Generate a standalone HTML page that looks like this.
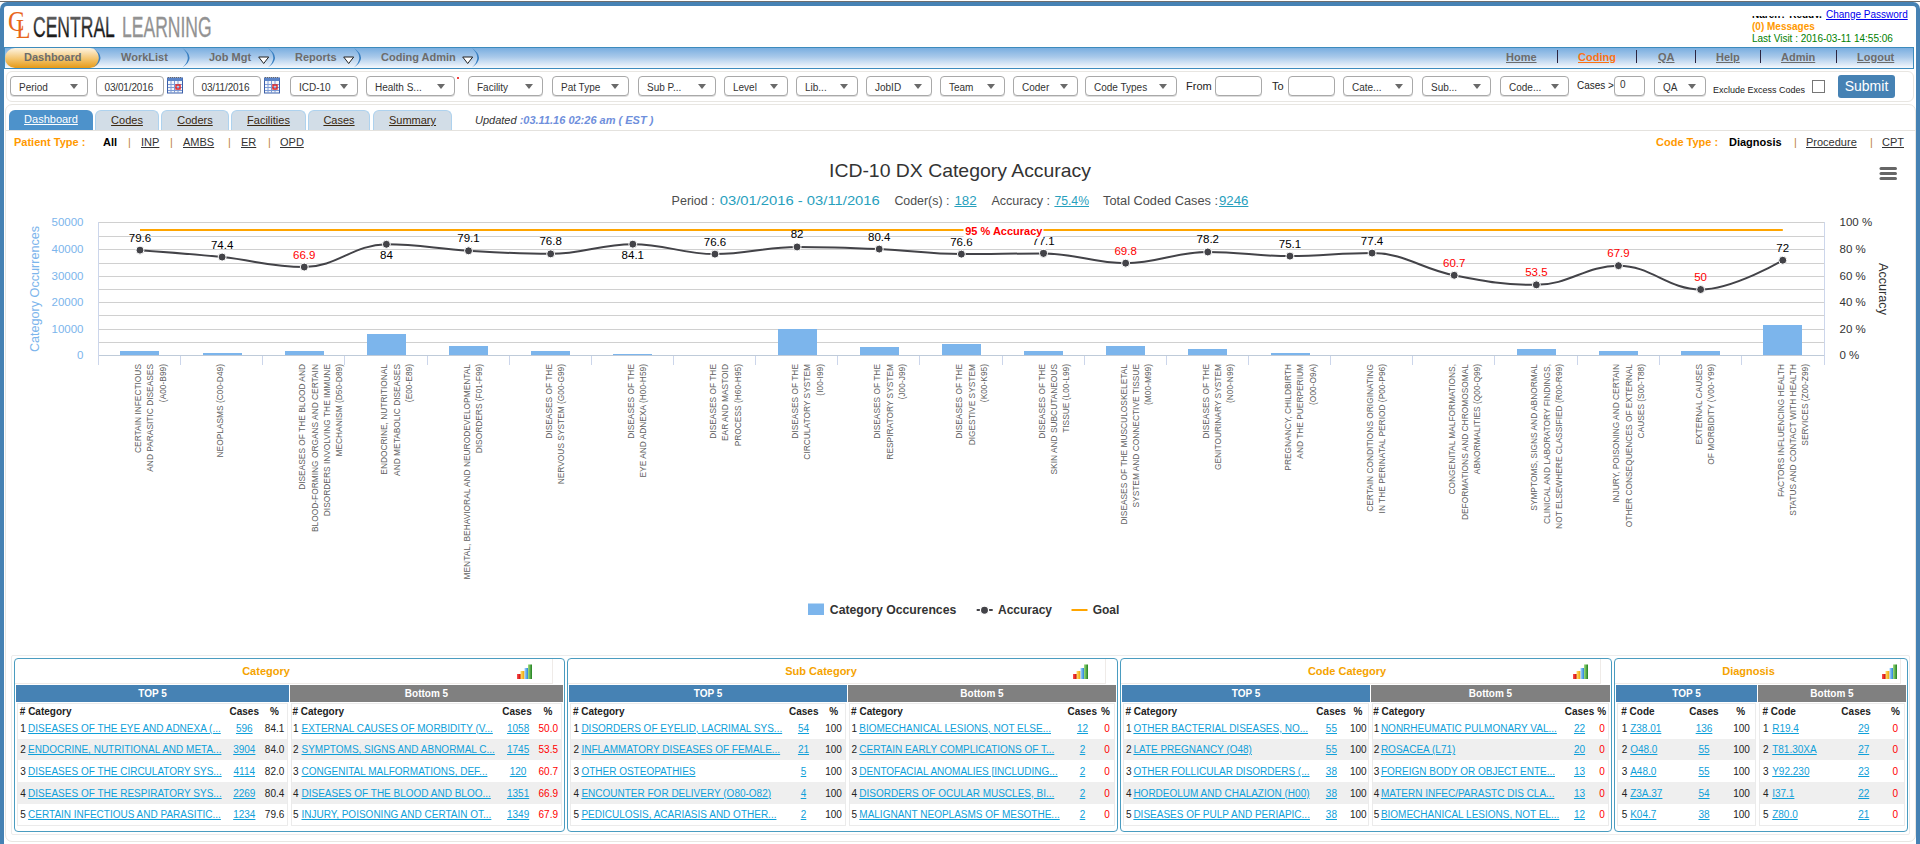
<!DOCTYPE html>
<html><head><meta charset="utf-8"><title>Central Learning - Dashboard</title>
<style>
html,body{margin:0;padding:0;width:1920px;height:844px;overflow:hidden;background:#fff;}
body{position:relative;font-family:"Liberation Sans",sans-serif;}
div,a,span,td,th{font-family:"Liberation Sans",sans-serif;}
</style></head><body>
<div style="position:absolute;left:0;top:1px;width:1920px;height:1px;background:#6e6e6e"></div>
<div style="position:absolute;left:0;top:2px;width:1912px;height:850px;border:4px solid #4682b4;border-bottom:none;border-radius:7px 7px 0 0;"></div>
<div style="position:absolute;left:8px;top:7px;font-family:'Liberation Serif',serif;color:#e8661a;font-size:29px;line-height:29px;transform:scaleX(0.85);transform-origin:0 0">C</div>
<div style="position:absolute;left:15.5px;top:15px;font-family:'Liberation Serif',serif;color:#e8661a;font-size:27px;line-height:29px;transform:scaleX(0.88);transform-origin:0 0">L</div>
<svg style="position:absolute;left:0;top:0" width="220" height="46"><defs><linearGradient id="lgc" x1="0" y1="0" x2="0" y2="1"><stop offset="0" stop-color="#8a8a8a"/><stop offset="0.45" stop-color="#333"/><stop offset="1" stop-color="#0d0d0d"/></linearGradient></defs>
<text transform="translate(33,36.6) scale(0.605,1)" font-family="Liberation Sans, sans-serif" font-size="29" fill="url(#lgc)" stroke="url(#lgc)" stroke-width="0.3">CENTRAL</text>
<text transform="translate(122,36.6) scale(0.605,1)" font-family="Liberation Sans, sans-serif" font-size="29" fill="#939393" stroke="#939393" stroke-width="0.3">LEARNING</text></svg>
<div style="position:absolute;left:1752px;top:15.5px;width:72px;height:2.5px;overflow:hidden;"><div style="position:absolute;top:-7.7px;left:0;font-size:10px;font-weight:bold;line-height:13px;color:#000;white-space:nowrap">Naren? Reddy,</div></div>
<a style="position:absolute;left:1826px;top:7.5px;font-size:10px;line-height:13px;color:#0000ee;text-decoration:underline;white-space:nowrap">Change Password</a>
<div style="position:absolute;left:1752px;top:20px;font-size:10px;font-weight:bold;line-height:13px;color:#ff9900;white-space:nowrap">(0) Messages</div>
<div style="position:absolute;left:1752px;top:32px;font-size:10px;line-height:13px;color:#008000;white-space:nowrap">Last Visit : 2016-03-11 14:55:06</div>
<div style="position:absolute;left:4px;top:47px;width:1908px;height:20px;border:1px solid #3d8bbd;background:linear-gradient(#7aaee0,#a9c9ea 45%,#f6f9fd);"></div>
<div style="position:absolute;left:5px;top:48px;width:95px;height:20px;border-radius:10px;background:linear-gradient(#fdf4e3,#f3c46d 55%,#e59a17);"></div>
<div style="position:absolute;left:24px;top:50px;font-size:11px;font-weight:bold;line-height:14px;color:#6c6c6c;white-space:nowrap">Dashboard</div>
<div style="position:absolute;left:121px;top:50px;font-size:11px;font-weight:bold;line-height:14px;color:#6c6c6c;white-space:nowrap">WorkList</div>
<div style="position:absolute;left:209px;top:50px;font-size:11px;font-weight:bold;line-height:14px;color:#6c6c6c;white-space:nowrap">Job Mgt</div>
<div style="position:absolute;left:295px;top:50px;font-size:11px;font-weight:bold;line-height:14px;color:#6c6c6c;white-space:nowrap">Reports</div>
<div style="position:absolute;left:381px;top:50px;font-size:11px;font-weight:bold;line-height:14px;color:#6c6c6c;white-space:nowrap">Coding Admin</div>
<svg style="position:absolute;left:0;top:0" width="500" height="70"><path d="M93.5 48 Q107.5 57.75 93.5 67.5 Q104.1 57.75 93.5 48 Z" fill="#3a80c2"/><path d="M182.5 48 Q196.5 57.75 182.5 67.5 Q193.1 57.75 182.5 48 Z" fill="#3a80c2"/><path d="M268 48 Q282 57.75 268 67.5 Q278.6 57.75 268 48 Z" fill="#3a80c2"/><path d="M354 48 Q368 57.75 354 67.5 Q364.6 57.75 354 48 Z" fill="#3a80c2"/><path d="M472 48 Q486 57.75 472 67.5 Q482.6 57.75 472 48 Z" fill="#3a80c2"/></svg>
<svg style="position:absolute;left:258px;top:56px" width="12" height="9"><path d="M0.7 1 L10.7 1 L5.7 7.5 Z" fill="#fff" stroke="#222" stroke-width="1"/></svg>
<svg style="position:absolute;left:343px;top:56px" width="12" height="9"><path d="M0.7 1 L10.7 1 L5.7 7.5 Z" fill="#fff" stroke="#222" stroke-width="1"/></svg>
<svg style="position:absolute;left:462px;top:56px" width="12" height="9"><path d="M0.7 1 L10.7 1 L5.7 7.5 Z" fill="#fff" stroke="#222" stroke-width="1"/></svg>
<div style="position:absolute;left:1506px;top:50px;font-size:11px;font-weight:bold;line-height:14px;color:#6c6c6c;text-decoration:underline;white-space:nowrap">Home</div>
<div style="position:absolute;left:1578px;top:50px;font-size:11px;font-weight:bold;line-height:14px;color:#fb7214;text-decoration:underline;white-space:nowrap">Coding</div>
<div style="position:absolute;left:1658px;top:50px;font-size:11px;font-weight:bold;line-height:14px;color:#6c6c6c;text-decoration:underline;white-space:nowrap">QA</div>
<div style="position:absolute;left:1716px;top:50px;font-size:11px;font-weight:bold;line-height:14px;color:#6c6c6c;text-decoration:underline;white-space:nowrap">Help</div>
<div style="position:absolute;left:1781px;top:50px;font-size:11px;font-weight:bold;line-height:14px;color:#6c6c6c;text-decoration:underline;white-space:nowrap">Admin</div>
<div style="position:absolute;left:1857px;top:50px;font-size:11px;font-weight:bold;line-height:14px;color:#6c6c6c;text-decoration:underline;white-space:nowrap">Logout</div>
<div style="position:absolute;left:1556.5px;top:50px;width:1.3px;height:13px;background:#2c2440"></div>
<div style="position:absolute;left:1635.5px;top:50px;width:1.3px;height:13px;background:#2c2440"></div>
<div style="position:absolute;left:1694.5px;top:50px;width:1.3px;height:13px;background:#2c2440"></div>
<div style="position:absolute;left:1759.5px;top:50px;width:1.3px;height:13px;background:#2c2440"></div>
<div style="position:absolute;left:1835.5px;top:50px;width:1.3px;height:13px;background:#2c2440"></div>
<div style="position:absolute;left:6px;top:71px;width:1906px;height:29px;border:1px solid #e8e6e2;border-radius:6px;"></div>
<div style="position:absolute;left:10px;top:76px;width:76px;height:18px;border:1px solid #a9a9a9;border-radius:4px;background:#fff;box-shadow:0 1px 0 #ddd"></div>
<div style="position:absolute;left:19px;top:80.5px;font-size:10px;line-height:13px;color:#333;white-space:nowrap">Period</div>
<svg style="position:absolute;left:70px;top:84px" width="9" height="6"><path d="M0 0 L8 0 L4 5 Z" fill="#6a6a6a"/></svg>
<div style="position:absolute;left:290px;top:76px;width:66px;height:18px;border:1px solid #a9a9a9;border-radius:4px;background:#fff;box-shadow:0 1px 0 #ddd"></div>
<div style="position:absolute;left:299px;top:80.5px;font-size:10px;line-height:13px;color:#333;white-space:nowrap">ICD-10</div>
<svg style="position:absolute;left:340px;top:84px" width="9" height="6"><path d="M0 0 L8 0 L4 5 Z" fill="#6a6a6a"/></svg>
<div style="position:absolute;left:366px;top:76px;width:87px;height:18px;border:1px solid #a9a9a9;border-radius:4px;background:#fff;box-shadow:0 1px 0 #ddd"></div>
<div style="position:absolute;left:375px;top:80.5px;font-size:10px;line-height:13px;color:#333;white-space:nowrap">Health S...</div>
<svg style="position:absolute;left:437px;top:84px" width="9" height="6"><path d="M0 0 L8 0 L4 5 Z" fill="#6a6a6a"/></svg>
<div style="position:absolute;left:468px;top:76px;width:73px;height:18px;border:1px solid #a9a9a9;border-radius:4px;background:#fff;box-shadow:0 1px 0 #ddd"></div>
<div style="position:absolute;left:477px;top:80.5px;font-size:10px;line-height:13px;color:#333;white-space:nowrap">Facility</div>
<svg style="position:absolute;left:525px;top:84px" width="9" height="6"><path d="M0 0 L8 0 L4 5 Z" fill="#6a6a6a"/></svg>
<div style="position:absolute;left:552px;top:76px;width:75px;height:18px;border:1px solid #a9a9a9;border-radius:4px;background:#fff;box-shadow:0 1px 0 #ddd"></div>
<div style="position:absolute;left:561px;top:80.5px;font-size:10px;line-height:13px;color:#333;white-space:nowrap">Pat Type</div>
<svg style="position:absolute;left:611px;top:84px" width="9" height="6"><path d="M0 0 L8 0 L4 5 Z" fill="#6a6a6a"/></svg>
<div style="position:absolute;left:638px;top:76px;width:76px;height:18px;border:1px solid #a9a9a9;border-radius:4px;background:#fff;box-shadow:0 1px 0 #ddd"></div>
<div style="position:absolute;left:647px;top:80.5px;font-size:10px;line-height:13px;color:#333;white-space:nowrap">Sub P...</div>
<svg style="position:absolute;left:698px;top:84px" width="9" height="6"><path d="M0 0 L8 0 L4 5 Z" fill="#6a6a6a"/></svg>
<div style="position:absolute;left:724px;top:76px;width:62px;height:18px;border:1px solid #a9a9a9;border-radius:4px;background:#fff;box-shadow:0 1px 0 #ddd"></div>
<div style="position:absolute;left:733px;top:80.5px;font-size:10px;line-height:13px;color:#333;white-space:nowrap">Level</div>
<svg style="position:absolute;left:770px;top:84px" width="9" height="6"><path d="M0 0 L8 0 L4 5 Z" fill="#6a6a6a"/></svg>
<div style="position:absolute;left:796px;top:76px;width:60px;height:18px;border:1px solid #a9a9a9;border-radius:4px;background:#fff;box-shadow:0 1px 0 #ddd"></div>
<div style="position:absolute;left:805px;top:80.5px;font-size:10px;line-height:13px;color:#333;white-space:nowrap">Lib...</div>
<svg style="position:absolute;left:840px;top:84px" width="9" height="6"><path d="M0 0 L8 0 L4 5 Z" fill="#6a6a6a"/></svg>
<div style="position:absolute;left:866px;top:76px;width:64px;height:18px;border:1px solid #a9a9a9;border-radius:4px;background:#fff;box-shadow:0 1px 0 #ddd"></div>
<div style="position:absolute;left:875px;top:80.5px;font-size:10px;line-height:13px;color:#333;white-space:nowrap">JobID</div>
<svg style="position:absolute;left:914px;top:84px" width="9" height="6"><path d="M0 0 L8 0 L4 5 Z" fill="#6a6a6a"/></svg>
<div style="position:absolute;left:940px;top:76px;width:63px;height:18px;border:1px solid #a9a9a9;border-radius:4px;background:#fff;box-shadow:0 1px 0 #ddd"></div>
<div style="position:absolute;left:949px;top:80.5px;font-size:10px;line-height:13px;color:#333;white-space:nowrap">Team</div>
<svg style="position:absolute;left:987px;top:84px" width="9" height="6"><path d="M0 0 L8 0 L4 5 Z" fill="#6a6a6a"/></svg>
<div style="position:absolute;left:1013px;top:76px;width:63px;height:18px;border:1px solid #a9a9a9;border-radius:4px;background:#fff;box-shadow:0 1px 0 #ddd"></div>
<div style="position:absolute;left:1022px;top:80.5px;font-size:10px;line-height:13px;color:#333;white-space:nowrap">Coder</div>
<svg style="position:absolute;left:1060px;top:84px" width="9" height="6"><path d="M0 0 L8 0 L4 5 Z" fill="#6a6a6a"/></svg>
<div style="position:absolute;left:1085px;top:76px;width:90px;height:18px;border:1px solid #a9a9a9;border-radius:4px;background:#fff;box-shadow:0 1px 0 #ddd"></div>
<div style="position:absolute;left:1094px;top:80.5px;font-size:10px;line-height:13px;color:#333;white-space:nowrap">Code Types</div>
<svg style="position:absolute;left:1159px;top:84px" width="9" height="6"><path d="M0 0 L8 0 L4 5 Z" fill="#6a6a6a"/></svg>
<div style="position:absolute;left:1343px;top:76px;width:68px;height:18px;border:1px solid #a9a9a9;border-radius:4px;background:#fff;box-shadow:0 1px 0 #ddd"></div>
<div style="position:absolute;left:1352px;top:80.5px;font-size:10px;line-height:13px;color:#333;white-space:nowrap">Cate...</div>
<svg style="position:absolute;left:1395px;top:84px" width="9" height="6"><path d="M0 0 L8 0 L4 5 Z" fill="#6a6a6a"/></svg>
<div style="position:absolute;left:1422px;top:76px;width:67px;height:18px;border:1px solid #a9a9a9;border-radius:4px;background:#fff;box-shadow:0 1px 0 #ddd"></div>
<div style="position:absolute;left:1431px;top:80.5px;font-size:10px;line-height:13px;color:#333;white-space:nowrap">Sub...</div>
<svg style="position:absolute;left:1473px;top:84px" width="9" height="6"><path d="M0 0 L8 0 L4 5 Z" fill="#6a6a6a"/></svg>
<div style="position:absolute;left:1500px;top:76px;width:67px;height:18px;border:1px solid #a9a9a9;border-radius:4px;background:#fff;box-shadow:0 1px 0 #ddd"></div>
<div style="position:absolute;left:1509px;top:80.5px;font-size:10px;line-height:13px;color:#333;white-space:nowrap">Code...</div>
<svg style="position:absolute;left:1551px;top:84px" width="9" height="6"><path d="M0 0 L8 0 L4 5 Z" fill="#6a6a6a"/></svg>
<div style="position:absolute;left:1654px;top:76px;width:50px;height:18px;border:1px solid #a9a9a9;border-radius:4px;background:#fff;box-shadow:0 1px 0 #ddd"></div>
<div style="position:absolute;left:1663px;top:80.5px;font-size:10px;line-height:13px;color:#333;white-space:nowrap">QA</div>
<svg style="position:absolute;left:1688px;top:84px" width="9" height="6"><path d="M0 0 L8 0 L4 5 Z" fill="#6a6a6a"/></svg>
<div style="position:absolute;left:96px;top:76px;width:66px;height:18px;border:1px solid #a9a9a9;border-radius:4px;background:#fff;box-shadow:0 1px 0 #ddd"></div>
<div style="position:absolute;left:104.5px;top:81px;font-size:10px;line-height:13px;color:#333;letter-spacing:-0.15px">03/01/2016</div>
<div style="position:absolute;left:193px;top:76px;width:66px;height:18px;border:1px solid #a9a9a9;border-radius:4px;background:#fff;box-shadow:0 1px 0 #ddd"></div>
<div style="position:absolute;left:201.5px;top:81px;font-size:10px;line-height:13px;color:#333;letter-spacing:-0.15px">03/11/2016</div>
<div style="position:absolute;left:1215px;top:76px;width:45px;height:18px;border:1px solid #a9a9a9;border-radius:4px;background:#fff;box-shadow:0 1px 0 #ddd"></div>
<div style="position:absolute;left:1288px;top:76px;width:45px;height:18px;border:1px solid #a9a9a9;border-radius:4px;background:#fff;box-shadow:0 1px 0 #ddd"></div>
<div style="position:absolute;left:1614px;top:76px;width:29px;height:18px;border:1px solid #a9a9a9;border-radius:4px;background:#fff;box-shadow:0 1px 0 #ddd"></div>
<div style="position:absolute;left:1620px;top:78px;font-size:10px;line-height:13px;color:#333">0</div>
<svg style="position:absolute;left:167px;top:77px" width="16" height="17" viewBox="0 0 16 17">
<rect x="0.5" y="1" width="15" height="15" fill="#f4f7fb" stroke="#3b5ea8" stroke-width="1"/>
<rect x="0.5" y="1" width="15" height="3" fill="#5b84c8"/>
<path d="M1 0.5 h14" stroke="#666" stroke-width="1" stroke-dasharray="1 1"/>
<path d="M4 4v12M7.5 4v12M11 4v12M1 7.5h14M1 10.5h14M1 13.5h14" stroke="#7d9bd6" stroke-width="1"/>
<rect x="9" y="8" width="4" height="4" fill="none" stroke="#e02020" stroke-width="1.4"/>
</svg>
<svg style="position:absolute;left:264px;top:77px" width="16" height="17" viewBox="0 0 16 17">
<rect x="0.5" y="1" width="15" height="15" fill="#f4f7fb" stroke="#3b5ea8" stroke-width="1"/>
<rect x="0.5" y="1" width="15" height="3" fill="#5b84c8"/>
<path d="M1 0.5 h14" stroke="#666" stroke-width="1" stroke-dasharray="1 1"/>
<path d="M4 4v12M7.5 4v12M11 4v12M1 7.5h14M1 10.5h14M1 13.5h14" stroke="#7d9bd6" stroke-width="1"/>
<rect x="9" y="8" width="4" height="4" fill="none" stroke="#e02020" stroke-width="1.4"/>
</svg>
<div style="position:absolute;left:457px;top:77px;width:2px;height:2px;background:#e00;border-radius:1px"></div>
<div style="position:absolute;left:1186px;top:80px;font-size:11px;line-height:13px;color:#222">From</div>
<div style="position:absolute;left:1272px;top:80px;font-size:11px;line-height:13px;color:#222">To</div>
<div style="position:absolute;left:1577px;top:79px;font-size:10px;line-height:13px;color:#222">Cases &gt;</div>
<div style="position:absolute;left:1713px;top:85px;font-size:9px;line-height:11px;color:#222;white-space:nowrap">Exclude Excess Codes</div>
<div style="position:absolute;left:1812px;top:80px;width:11px;height:11px;border:1px solid #767676;background:#fff"></div>
<div style="position:absolute;left:1838px;top:75px;width:57px;height:23px;background:#4682b4;border-radius:3px;color:#fff;font-size:14px;line-height:23px;text-align:center">Submit</div>
<div style="position:absolute;left:5px;top:104px;width:1909px;height:736px;border:1px solid #e8e6e2;border-radius:7px;"></div>
<div style="position:absolute;left:9px;top:110px;width:84px;height:20px;background:#4d92cb;border-radius:6px 6px 0 0;color:#fff;font-size:11px;line-height:19px;text-align:center;text-decoration:underline">Dashboard</div>
<div style="position:absolute;left:95px;top:110px;width:62px;height:19px;background:#d2dde7;border:1px solid #aed2ee;border-bottom:none;border-radius:6px 6px 0 0;color:#3a2810;font-size:11px;line-height:19px;text-align:center;text-decoration:underline">Codes</div>
<div style="position:absolute;left:161px;top:110px;width:66px;height:19px;background:#d2dde7;border:1px solid #aed2ee;border-bottom:none;border-radius:6px 6px 0 0;color:#3a2810;font-size:11px;line-height:19px;text-align:center;text-decoration:underline">Coders</div>
<div style="position:absolute;left:231px;top:110px;width:73px;height:19px;background:#d2dde7;border:1px solid #aed2ee;border-bottom:none;border-radius:6px 6px 0 0;color:#3a2810;font-size:11px;line-height:19px;text-align:center;text-decoration:underline">Facilities</div>
<div style="position:absolute;left:308px;top:110px;width:60px;height:19px;background:#d2dde7;border:1px solid #aed2ee;border-bottom:none;border-radius:6px 6px 0 0;color:#3a2810;font-size:11px;line-height:19px;text-align:center;text-decoration:underline">Cases</div>
<div style="position:absolute;left:373px;top:110px;width:77px;height:19px;background:#d2dde7;border:1px solid #aed2ee;border-bottom:none;border-radius:6px 6px 0 0;color:#3a2810;font-size:11px;line-height:19px;text-align:center;text-decoration:underline">Summary</div>
<div style="position:absolute;left:6px;top:130px;width:1910px;height:1px;background:#e4e2de"></div>
<div style="position:absolute;left:475px;top:113px;font-size:11px;line-height:14px;font-style:italic;color:#333;white-space:nowrap">Updated <span style="color:#6f8fdc;font-weight:bold">:03.11.16 02:26 am ( EST )</span></div>
<div style="position:absolute;left:14px;top:136px;font-size:11px;line-height:13px;color:#ff9900;font-weight:bold;white-space:nowrap">Patient Type :</div>
<div style="position:absolute;left:103px;top:136px;font-size:11px;line-height:13px;color:#000;font-weight:bold">All</div>
<div style="position:absolute;left:128px;top:136px;font-size:11px;line-height:13px;color:#c08040">|</div>
<div style="position:absolute;left:141px;top:136px;font-size:11px;line-height:13px;color:#333;text-decoration:underline">INP</div>
<div style="position:absolute;left:170px;top:136px;font-size:11px;line-height:13px;color:#c08040">|</div>
<div style="position:absolute;left:183px;top:136px;font-size:11px;line-height:13px;color:#333;text-decoration:underline">AMBS</div>
<div style="position:absolute;left:228px;top:136px;font-size:11px;line-height:13px;color:#c08040">|</div>
<div style="position:absolute;left:241px;top:136px;font-size:11px;line-height:13px;color:#333;text-decoration:underline">ER</div>
<div style="position:absolute;left:268px;top:136px;font-size:11px;line-height:13px;color:#c08040">|</div>
<div style="position:absolute;left:280px;top:136px;font-size:11px;line-height:13px;color:#333;text-decoration:underline">OPD</div>
<div style="position:absolute;left:1656px;top:136px;font-size:11px;line-height:13px;color:#ff9900;font-weight:bold;white-space:nowrap">Code Type :</div>
<div style="position:absolute;left:1729px;top:136px;font-size:11px;line-height:13px;color:#000;font-weight:bold">Diagnosis</div>
<div style="position:absolute;left:1794px;top:136px;font-size:11px;line-height:13px;color:#c08040">|</div>
<div style="position:absolute;left:1806px;top:136px;font-size:11px;line-height:13px;color:#333;text-decoration:underline">Procedure</div>
<div style="position:absolute;left:1870px;top:136px;font-size:11px;line-height:13px;color:#c08040">|</div>
<div style="position:absolute;left:1882px;top:136px;font-size:11px;line-height:13px;color:#333;text-decoration:underline">CPT</div>
<svg style="position:absolute;left:0;top:150px" width="1920" height="490" viewBox="0 150 1920 490" font-family="Liberation Sans, sans-serif">
<text x="960" y="176.6" text-anchor="middle" font-size="19" fill="#333" textLength="262" lengthAdjust="spacingAndGlyphs">ICD-10 DX Category Accuracy</text>
<text x="671.6" y="204.8" font-size="12" fill="#4d4d4d" textLength="43.1" lengthAdjust="spacingAndGlyphs">Period :</text>
<text x="719.7" y="204.8" font-size="12" fill="#27a0bd" textLength="160.1" lengthAdjust="spacingAndGlyphs">03/01/2016 - 03/11/2016</text>
<text x="894.4" y="204.8" font-size="12" fill="#4d4d4d" textLength="55.0" lengthAdjust="spacingAndGlyphs">Coder(s) :</text>
<text x="954.4" y="204.8" font-size="12" fill="#27a0bd" textLength="22.2" lengthAdjust="spacingAndGlyphs">182</text>
<rect x="954.4" y="206" width="22.2" height="1" fill="#27a0bd"/>
<text x="991.4" y="204.8" font-size="12" fill="#4d4d4d" textLength="58.6" lengthAdjust="spacingAndGlyphs">Accuracy :</text>
<text x="1054.4" y="204.8" font-size="12" fill="#27a0bd" textLength="34.6" lengthAdjust="spacingAndGlyphs">75.4%</text>
<rect x="1054.4" y="206" width="34.6" height="1" fill="#27a0bd"/>
<text x="1103" y="204.8" font-size="12" fill="#4d4d4d" textLength="115.0" lengthAdjust="spacingAndGlyphs">Total Coded Cases :</text>
<text x="1219" y="204.8" font-size="12" fill="#27a0bd" textLength="29.4" lengthAdjust="spacingAndGlyphs">9246</text>
<rect x="1219" y="206" width="29.4" height="1" fill="#27a0bd"/>
<rect x="1879.5" y="167" width="17.5" height="3" rx="1.5" fill="#666"/>
<rect x="1879.5" y="172" width="17.5" height="3" rx="1.5" fill="#666"/>
<rect x="1879.5" y="177" width="17.5" height="3" rx="1.5" fill="#666"/>
<rect x="99" y="222" width="1725" height="1" fill="#d0d0d0"/>
<rect x="99" y="236" width="1725" height="1" fill="#d0d0d0"/>
<rect x="99" y="249" width="1725" height="1" fill="#d0d0d0"/>
<rect x="99" y="263" width="1725" height="1" fill="#d0d0d0"/>
<rect x="99" y="276" width="1725" height="1" fill="#d0d0d0"/>
<rect x="99" y="289" width="1725" height="1" fill="#d0d0d0"/>
<rect x="99" y="302" width="1725" height="1" fill="#d0d0d0"/>
<rect x="99" y="315" width="1725" height="1" fill="#d0d0d0"/>
<rect x="99" y="329" width="1725" height="1" fill="#d0d0d0"/>
<rect x="99" y="342" width="1725" height="1" fill="#d0d0d0"/>
<rect x="120" y="351" width="39" height="4" fill="#7cb5ec"/>
<rect x="203" y="353" width="39" height="2" fill="#7cb5ec"/>
<rect x="285" y="351" width="39" height="4" fill="#7cb5ec"/>
<rect x="367" y="334" width="39" height="21" fill="#7cb5ec"/>
<rect x="449" y="346" width="39" height="9" fill="#7cb5ec"/>
<rect x="531" y="351" width="39" height="4" fill="#7cb5ec"/>
<rect x="613" y="354" width="39" height="1" fill="#7cb5ec"/>
<rect x="778" y="329" width="39" height="26" fill="#7cb5ec"/>
<rect x="860" y="347" width="39" height="8" fill="#7cb5ec"/>
<rect x="942" y="344" width="39" height="11" fill="#7cb5ec"/>
<rect x="1024" y="351" width="39" height="4" fill="#7cb5ec"/>
<rect x="1106" y="346" width="39" height="9" fill="#7cb5ec"/>
<rect x="1188" y="349" width="39" height="6" fill="#7cb5ec"/>
<rect x="1271" y="353" width="39" height="2" fill="#7cb5ec"/>
<rect x="1517" y="349" width="39" height="6" fill="#7cb5ec"/>
<rect x="1599" y="351" width="39" height="4" fill="#7cb5ec"/>
<rect x="1681" y="351" width="39" height="4" fill="#7cb5ec"/>
<rect x="1763" y="325" width="39" height="30" fill="#7cb5ec"/>
<rect x="99" y="355" width="1726" height="1" fill="#bfcbd9"/>
<rect x="98" y="222" width="1" height="143" fill="#ccd6eb"/>
<rect x="1824" y="222" width="1" height="143" fill="#ccd6eb"/>
<rect x="180" y="356" width="1" height="9" fill="#ccd6eb"/>
<rect x="262" y="356" width="1" height="9" fill="#ccd6eb"/>
<rect x="344" y="356" width="1" height="9" fill="#ccd6eb"/>
<rect x="427" y="356" width="1" height="9" fill="#ccd6eb"/>
<rect x="509" y="356" width="1" height="9" fill="#ccd6eb"/>
<rect x="591" y="356" width="1" height="9" fill="#ccd6eb"/>
<rect x="673" y="356" width="1" height="9" fill="#ccd6eb"/>
<rect x="755" y="356" width="1" height="9" fill="#ccd6eb"/>
<rect x="837" y="356" width="1" height="9" fill="#ccd6eb"/>
<rect x="919" y="356" width="1" height="9" fill="#ccd6eb"/>
<rect x="1002" y="356" width="1" height="9" fill="#ccd6eb"/>
<rect x="1084" y="356" width="1" height="9" fill="#ccd6eb"/>
<rect x="1166" y="356" width="1" height="9" fill="#ccd6eb"/>
<rect x="1248" y="356" width="1" height="9" fill="#ccd6eb"/>
<rect x="1330" y="356" width="1" height="9" fill="#ccd6eb"/>
<rect x="1412" y="356" width="1" height="9" fill="#ccd6eb"/>
<rect x="1494" y="356" width="1" height="9" fill="#ccd6eb"/>
<rect x="1577" y="356" width="1" height="9" fill="#ccd6eb"/>
<rect x="1659" y="356" width="1" height="9" fill="#ccd6eb"/>
<rect x="1741" y="356" width="1" height="9" fill="#ccd6eb"/>
<rect x="140.0" y="229" width="1642.8" height="2" fill="#ffa500"/>
<text x="83.5" y="359.2" text-anchor="end" font-size="11.5" fill="#7cb5ec">0</text>
<text x="1839.5" y="359.2" font-size="11.5" fill="#333">0 %</text>
<text x="83.5" y="333.2" text-anchor="end" font-size="11.5" fill="#7cb5ec">10000</text>
<text x="1839.5" y="333.2" font-size="11.5" fill="#333">20 %</text>
<text x="83.5" y="306.2" text-anchor="end" font-size="11.5" fill="#7cb5ec">20000</text>
<text x="1839.5" y="306.2" font-size="11.5" fill="#333">40 %</text>
<text x="83.5" y="280.2" text-anchor="end" font-size="11.5" fill="#7cb5ec">30000</text>
<text x="1839.5" y="280.2" font-size="11.5" fill="#333">60 %</text>
<text x="83.5" y="253.2" text-anchor="end" font-size="11.5" fill="#7cb5ec">40000</text>
<text x="1839.5" y="253.2" font-size="11.5" fill="#333">80 %</text>
<text x="83.5" y="226.2" text-anchor="end" font-size="11.5" fill="#7cb5ec">50000</text>
<text x="1839.5" y="226.2" font-size="11.5" fill="#333">100 %</text>
<text transform="translate(39.3,289) rotate(-90)" text-anchor="middle" font-size="12.2" fill="#7cb5ec" textLength="126" lengthAdjust="spacingAndGlyphs">Category Occurrences</text>
<text transform="translate(1879,289) rotate(90)" text-anchor="middle" font-size="13" fill="#333" textLength="52" lengthAdjust="spacingAndGlyphs">Accuracy</text>
<path d="M 139.97 250.13 C 139.97 250.13 189.25 253.67 222.11 257.05 C 254.97 260.43 271.39 267.02 304.25 267.02 C 337.11 267.02 353.53 244.28 386.39 244.28 C 419.25 244.28 435.67 248.88 468.53 250.80 C 501.39 252.71 517.81 253.86 550.67 253.86 C 583.53 253.86 599.95 244.15 632.81 244.15 C 665.67 244.15 682.09 254.12 714.95 254.12 C 747.81 254.12 764.23 246.94 797.09 246.94 C 829.95 246.94 846.37 247.63 879.23 249.07 C 912.09 250.50 928.51 254.12 961.37 254.12 C 994.23 254.12 1010.65 253.46 1043.51 253.46 C 1076.37 253.46 1092.79 263.17 1125.65 263.17 C 1158.51 263.17 1174.93 251.99 1207.79 251.99 C 1240.65 251.99 1257.07 256.12 1289.93 256.12 C 1322.79 256.12 1339.21 253.06 1372.07 253.06 C 1404.93 253.06 1421.35 268.91 1454.21 275.27 C 1487.07 281.63 1503.49 284.85 1536.35 284.85 C 1569.21 284.85 1585.63 265.69 1618.49 265.69 C 1651.35 265.69 1667.77 289.50 1700.63 289.50 C 1733.49 289.50 1782.77 260.24 1782.77 260.24" fill="none" stroke="#434348" stroke-width="2"/>
<circle cx="139.97" cy="250.13" r="4" fill="#434348" stroke="#fff" stroke-width="1"/>
<circle cx="222.11" cy="257.05" r="4" fill="#434348" stroke="#fff" stroke-width="1"/>
<circle cx="304.25" cy="267.02" r="4" fill="#434348" stroke="#fff" stroke-width="1"/>
<circle cx="386.39" cy="244.28" r="4" fill="#434348" stroke="#fff" stroke-width="1"/>
<circle cx="468.53" cy="250.80" r="4" fill="#434348" stroke="#fff" stroke-width="1"/>
<circle cx="550.67" cy="253.86" r="4" fill="#434348" stroke="#fff" stroke-width="1"/>
<circle cx="632.81" cy="244.15" r="4" fill="#434348" stroke="#fff" stroke-width="1"/>
<circle cx="714.95" cy="254.12" r="4" fill="#434348" stroke="#fff" stroke-width="1"/>
<circle cx="797.09" cy="246.94" r="4" fill="#434348" stroke="#fff" stroke-width="1"/>
<circle cx="879.23" cy="249.07" r="4" fill="#434348" stroke="#fff" stroke-width="1"/>
<circle cx="961.37" cy="254.12" r="4" fill="#434348" stroke="#fff" stroke-width="1"/>
<circle cx="1043.51" cy="253.46" r="4" fill="#434348" stroke="#fff" stroke-width="1"/>
<circle cx="1125.65" cy="263.17" r="4" fill="#434348" stroke="#fff" stroke-width="1"/>
<circle cx="1207.79" cy="251.99" r="4" fill="#434348" stroke="#fff" stroke-width="1"/>
<circle cx="1289.93" cy="256.12" r="4" fill="#434348" stroke="#fff" stroke-width="1"/>
<circle cx="1372.07" cy="253.06" r="4" fill="#434348" stroke="#fff" stroke-width="1"/>
<circle cx="1454.21" cy="275.27" r="4" fill="#434348" stroke="#fff" stroke-width="1"/>
<circle cx="1536.35" cy="284.85" r="4" fill="#434348" stroke="#fff" stroke-width="1"/>
<circle cx="1618.49" cy="265.69" r="4" fill="#434348" stroke="#fff" stroke-width="1"/>
<circle cx="1700.63" cy="289.50" r="4" fill="#434348" stroke="#fff" stroke-width="1"/>
<circle cx="1782.77" cy="260.24" r="4" fill="#434348" stroke="#fff" stroke-width="1"/>
<text x="139.97" y="241.63" text-anchor="middle" font-size="11.5" fill="#000">79.6</text>
<text x="222.11" y="248.55" text-anchor="middle" font-size="11.5" fill="#000">74.4</text>
<text x="304.25" y="258.52" text-anchor="middle" font-size="11.5" fill="#ff0000">66.9</text>
<text x="386.39" y="259.28" text-anchor="middle" font-size="11.5" fill="#000">84</text>
<text x="468.53" y="242.30" text-anchor="middle" font-size="11.5" fill="#000">79.1</text>
<text x="550.67" y="245.36" text-anchor="middle" font-size="11.5" fill="#000">76.8</text>
<text x="632.81" y="259.15" text-anchor="middle" font-size="11.5" fill="#000">84.1</text>
<text x="714.95" y="245.62" text-anchor="middle" font-size="11.5" fill="#000">76.6</text>
<text x="797.09" y="238.44" text-anchor="middle" font-size="11.5" fill="#000">82</text>
<text x="879.23" y="240.57" text-anchor="middle" font-size="11.5" fill="#000">80.4</text>
<text x="961.37" y="245.62" text-anchor="middle" font-size="11.5" fill="#000">76.6</text>
<text x="1043.51" y="244.96" text-anchor="middle" font-size="11.5" fill="#000">77.1</text>
<text x="1125.65" y="254.67" text-anchor="middle" font-size="11.5" fill="#ff0000">69.8</text>
<text x="1207.79" y="243.49" text-anchor="middle" font-size="11.5" fill="#000">78.2</text>
<text x="1289.93" y="247.62" text-anchor="middle" font-size="11.5" fill="#000">75.1</text>
<text x="1372.07" y="244.56" text-anchor="middle" font-size="11.5" fill="#000">77.4</text>
<text x="1454.21" y="266.77" text-anchor="middle" font-size="11.5" fill="#ff0000">60.7</text>
<text x="1536.35" y="276.35" text-anchor="middle" font-size="11.5" fill="#ff0000">53.5</text>
<text x="1618.49" y="257.19" text-anchor="middle" font-size="11.5" fill="#ff0000">67.9</text>
<text x="1700.63" y="281.00" text-anchor="middle" font-size="11.5" fill="#ff0000">50</text>
<text x="1782.77" y="251.74" text-anchor="middle" font-size="11.5" fill="#000">72</text>
<rect x="963.5" y="223" width="80" height="15.6" fill="#fff"/>
<text x="1003.8" y="234.6" text-anchor="middle" font-size="11" font-weight="bold" fill="#f00">95 % Accuracy</text>
<text transform="translate(140.97,364) rotate(-90) scale(0.93,1)" text-anchor="end" font-size="9" fill="#606060">CERTAIN INFECTIOUS</text>
<text transform="translate(153.27,364) rotate(-90) scale(0.93,1)" text-anchor="end" font-size="9" fill="#606060">AND PARASITIC DISEASES</text>
<text transform="translate(165.57,364) rotate(-90) scale(0.93,1)" text-anchor="end" font-size="9" fill="#606060">(A00-B99)</text>
<text transform="translate(223.11,364) rotate(-90) scale(0.93,1)" text-anchor="end" font-size="9" fill="#606060">NEOPLASMS (C00-D49)</text>
<text transform="translate(305.25,364) rotate(-90) scale(0.93,1)" text-anchor="end" font-size="9" fill="#606060">DISEASES OF THE BLOOD AND</text>
<text transform="translate(317.55,364) rotate(-90) scale(0.93,1)" text-anchor="end" font-size="9" fill="#606060">BLOOD-FORMING ORGANS AND CERTAIN</text>
<text transform="translate(329.85,364) rotate(-90) scale(0.93,1)" text-anchor="end" font-size="9" fill="#606060">DISORDERS INVOLVING THE IMMUNE</text>
<text transform="translate(342.15,364) rotate(-90) scale(0.93,1)" text-anchor="end" font-size="9" fill="#606060">MECHANISM (D50-D89)</text>
<text transform="translate(387.39,364) rotate(-90) scale(0.93,1)" text-anchor="end" font-size="9" fill="#606060">ENDOCRINE, NUTRITIONAL</text>
<text transform="translate(399.69,364) rotate(-90) scale(0.93,1)" text-anchor="end" font-size="9" fill="#606060">AND METABOLIC DISEASES</text>
<text transform="translate(411.99,364) rotate(-90) scale(0.93,1)" text-anchor="end" font-size="9" fill="#606060">(E00-E89)</text>
<text transform="translate(469.53,364) rotate(-90) scale(0.93,1)" text-anchor="end" font-size="9" fill="#606060">MENTAL, BEHAVIORAL AND NEURODEVELOPMENTAL</text>
<text transform="translate(481.83,364) rotate(-90) scale(0.93,1)" text-anchor="end" font-size="9" fill="#606060">DISORDERS (F01-F99)</text>
<text transform="translate(551.67,364) rotate(-90) scale(0.93,1)" text-anchor="end" font-size="9" fill="#606060">DISEASES OF THE</text>
<text transform="translate(563.97,364) rotate(-90) scale(0.93,1)" text-anchor="end" font-size="9" fill="#606060">NERVOUS SYSTEM (G00-G99)</text>
<text transform="translate(633.81,364) rotate(-90) scale(0.93,1)" text-anchor="end" font-size="9" fill="#606060">DISEASES OF THE</text>
<text transform="translate(646.11,364) rotate(-90) scale(0.93,1)" text-anchor="end" font-size="9" fill="#606060">EYE AND ADNEXA (H00-H59)</text>
<text transform="translate(715.95,364) rotate(-90) scale(0.93,1)" text-anchor="end" font-size="9" fill="#606060">DISEASES OF THE</text>
<text transform="translate(728.25,364) rotate(-90) scale(0.93,1)" text-anchor="end" font-size="9" fill="#606060">EAR AND MASTOID</text>
<text transform="translate(740.55,364) rotate(-90) scale(0.93,1)" text-anchor="end" font-size="9" fill="#606060">PROCESS (H60-H95)</text>
<text transform="translate(798.09,364) rotate(-90) scale(0.93,1)" text-anchor="end" font-size="9" fill="#606060">DISEASES OF THE</text>
<text transform="translate(810.39,364) rotate(-90) scale(0.93,1)" text-anchor="end" font-size="9" fill="#606060">CIRCULATORY SYSTEM</text>
<text transform="translate(822.69,364) rotate(-90) scale(0.93,1)" text-anchor="end" font-size="9" fill="#606060">(I00-I99)</text>
<text transform="translate(880.23,364) rotate(-90) scale(0.93,1)" text-anchor="end" font-size="9" fill="#606060">DISEASES OF THE</text>
<text transform="translate(892.53,364) rotate(-90) scale(0.93,1)" text-anchor="end" font-size="9" fill="#606060">RESPIRATORY SYSTEM</text>
<text transform="translate(904.83,364) rotate(-90) scale(0.93,1)" text-anchor="end" font-size="9" fill="#606060">(J00-J99)</text>
<text transform="translate(962.37,364) rotate(-90) scale(0.93,1)" text-anchor="end" font-size="9" fill="#606060">DISEASES OF THE</text>
<text transform="translate(974.67,364) rotate(-90) scale(0.93,1)" text-anchor="end" font-size="9" fill="#606060">DIGESTIVE SYSTEM</text>
<text transform="translate(986.97,364) rotate(-90) scale(0.93,1)" text-anchor="end" font-size="9" fill="#606060">(K00-K95)</text>
<text transform="translate(1044.51,364) rotate(-90) scale(0.93,1)" text-anchor="end" font-size="9" fill="#606060">DISEASES OF THE</text>
<text transform="translate(1056.81,364) rotate(-90) scale(0.93,1)" text-anchor="end" font-size="9" fill="#606060">SKIN AND SUBCUTANEOUS</text>
<text transform="translate(1069.11,364) rotate(-90) scale(0.93,1)" text-anchor="end" font-size="9" fill="#606060">TISSUE (L00-L99)</text>
<text transform="translate(1126.65,364) rotate(-90) scale(0.93,1)" text-anchor="end" font-size="9" fill="#606060">DISEASES OF THE MUSCULOSKELETAL</text>
<text transform="translate(1138.95,364) rotate(-90) scale(0.93,1)" text-anchor="end" font-size="9" fill="#606060">SYSTEM AND CONNECTIVE TISSUE</text>
<text transform="translate(1151.25,364) rotate(-90) scale(0.93,1)" text-anchor="end" font-size="9" fill="#606060">(M00-M99)</text>
<text transform="translate(1208.79,364) rotate(-90) scale(0.93,1)" text-anchor="end" font-size="9" fill="#606060">DISEASES OF THE</text>
<text transform="translate(1221.09,364) rotate(-90) scale(0.93,1)" text-anchor="end" font-size="9" fill="#606060">GENITOURINARY SYSTEM</text>
<text transform="translate(1233.39,364) rotate(-90) scale(0.93,1)" text-anchor="end" font-size="9" fill="#606060">(N00-N99)</text>
<text transform="translate(1290.93,364) rotate(-90) scale(0.93,1)" text-anchor="end" font-size="9" fill="#606060">PREGNANCY, CHILDBIRTH</text>
<text transform="translate(1303.23,364) rotate(-90) scale(0.93,1)" text-anchor="end" font-size="9" fill="#606060">AND THE PUERPERIUM</text>
<text transform="translate(1315.53,364) rotate(-90) scale(0.93,1)" text-anchor="end" font-size="9" fill="#606060">(O00-O9A)</text>
<text transform="translate(1373.07,364) rotate(-90) scale(0.93,1)" text-anchor="end" font-size="9" fill="#606060">CERTAIN CONDITIONS ORIGINATING</text>
<text transform="translate(1385.37,364) rotate(-90) scale(0.93,1)" text-anchor="end" font-size="9" fill="#606060">IN THE PERINATAL PERIOD (P00-P96)</text>
<text transform="translate(1455.21,364) rotate(-90) scale(0.93,1)" text-anchor="end" font-size="9" fill="#606060">CONGENITAL MALFORMATIONS,</text>
<text transform="translate(1467.51,364) rotate(-90) scale(0.93,1)" text-anchor="end" font-size="9" fill="#606060">DEFORMATIONS AND CHROMOSOMAL</text>
<text transform="translate(1479.81,364) rotate(-90) scale(0.93,1)" text-anchor="end" font-size="9" fill="#606060">ABNORMALITIES (Q00-Q99)</text>
<text transform="translate(1537.35,364) rotate(-90) scale(0.93,1)" text-anchor="end" font-size="9" fill="#606060">SYMPTOMS, SIGNS AND ABNORMAL</text>
<text transform="translate(1549.65,364) rotate(-90) scale(0.93,1)" text-anchor="end" font-size="9" fill="#606060">CLINICAL AND LABORATORY FINDINGS,</text>
<text transform="translate(1561.95,364) rotate(-90) scale(0.93,1)" text-anchor="end" font-size="9" fill="#606060">NOT ELSEWHERE CLASSIFIED (R00-R99)</text>
<text transform="translate(1619.49,364) rotate(-90) scale(0.93,1)" text-anchor="end" font-size="9" fill="#606060">INJURY, POISONING AND CERTAIN</text>
<text transform="translate(1631.79,364) rotate(-90) scale(0.93,1)" text-anchor="end" font-size="9" fill="#606060">OTHER CONSEQUENCES OF EXTERNAL</text>
<text transform="translate(1644.09,364) rotate(-90) scale(0.93,1)" text-anchor="end" font-size="9" fill="#606060">CAUSES (S00-T88)</text>
<text transform="translate(1701.63,364) rotate(-90) scale(0.93,1)" text-anchor="end" font-size="9" fill="#606060">EXTERNAL CAUSES</text>
<text transform="translate(1713.93,364) rotate(-90) scale(0.93,1)" text-anchor="end" font-size="9" fill="#606060">OF MORBIDITY (V00-Y99)</text>
<text transform="translate(1783.77,364) rotate(-90) scale(0.93,1)" text-anchor="end" font-size="9" fill="#606060">FACTORS INFLUENCING HEALTH</text>
<text transform="translate(1796.07,364) rotate(-90) scale(0.93,1)" text-anchor="end" font-size="9" fill="#606060">STATUS AND CONTACT WITH HEALTH</text>
<text transform="translate(1808.37,364) rotate(-90) scale(0.93,1)" text-anchor="end" font-size="9" fill="#606060">SERVICES (Z00-Z99)</text>
<rect x="808" y="603.5" width="16" height="11.5" fill="#7cb5ec"/>
<text x="829.8" y="613.8" font-size="12" font-weight="bold" fill="#333" textLength="126.5" lengthAdjust="spacingAndGlyphs">Category Occurences</text>
<rect x="976.7" y="609" width="16" height="2" fill="#434348"/>
<circle cx="984.5" cy="610.2" r="4.1" fill="#434348" stroke="#fff" stroke-width="1.3"/>
<text x="998" y="613.8" font-size="12" font-weight="bold" fill="#333">Accuracy</text>
<rect x="1071.5" y="609" width="16" height="2" fill="#ffa500"/>
<text x="1092.7" y="613.8" font-size="12" font-weight="bold" fill="#333">Goal</text>
</svg>
<div style="position:absolute;left:11px;top:655px;width:1897px;height:178px;border:1px solid #ececec;border-radius:2px"></div>
<div style="position:absolute;left:14px;top:658px;width:549px;height:171.8px;border:1px solid #4a9cc0;border-radius:4px"></div>
<div style="position:absolute;left:15px;top:683px;width:538px;height:1px;background:#efebe8"></div>
<div style="position:absolute;left:552px;top:659px;width:1px;height:25px;background:#efebe8"></div>
<div style="position:absolute;left:166px;top:665px;width:200px;text-align:center;font-size:11px;font-weight:bold;line-height:13px;color:#f5a300">Category</div>
<svg style="position:absolute;left:517px;top:664px" width="16" height="16" viewBox="0 0 16 16">
<defs><linearGradient id="gr517" x1="0" x2="1"><stop offset="0" stop-color="#ff5050"/><stop offset="1" stop-color="#c00000"/></linearGradient>
<linearGradient id="gy517" x1="0" x2="1"><stop offset="0" stop-color="#ffe070"/><stop offset="1" stop-color="#f0a000"/></linearGradient>
<linearGradient id="gb517" x1="0" x2="1"><stop offset="0" stop-color="#a8d8ff"/><stop offset="1" stop-color="#1a78d0"/></linearGradient>
<linearGradient id="gg517" x1="0" x2="1"><stop offset="0" stop-color="#a0e080"/><stop offset="1" stop-color="#208020"/></linearGradient></defs>
<rect x="0" y="10" width="4" height="5" fill="url(#gr517)"/>
<rect x="3.5" y="7" width="4" height="8" fill="url(#gy517)"/>
<rect x="7.5" y="4" width="4" height="11" fill="url(#gb517)"/>
<rect x="11" y="0.5" width="4" height="14.5" fill="url(#gg517)"/>
</svg>
<div style="position:absolute;left:16px;top:685px;width:273px;height:17px;background:#4682b4;color:#fff;font-size:10px;font-weight:bold;line-height:17px;text-align:center">TOP 5</div>
<div style="position:absolute;left:17px;top:703px;width:269px;height:121px;border:1px solid #ebebeb"></div>
<div style="position:absolute;left:19.8px;top:705px;font-size:10px;font-weight:bold;line-height:14px;color:#222;white-space:nowrap"># Category</div>
<div style="position:absolute;left:214.25px;top:705px;width:60px;text-align:center;font-size:10px;font-weight:bold;line-height:14px;color:#222">Cases</div>
<div style="position:absolute;left:254.5px;top:705px;width:40px;text-align:center;font-size:10px;font-weight:bold;line-height:14px;color:#222">%</div>
<div style="position:absolute;left:20.3px;top:717.7px;font-size:10px;line-height:21.6px;color:#222">1</div>
<div style="position:absolute;left:28.1px;top:717.7px;font-size:10px;line-height:21.6px;color:#0ea0d9;text-decoration:underline;white-space:nowrap">DISEASES OF THE EYE AND ADNEXA (...</div>
<div style="position:absolute;left:214.3px;top:717.7px;width:60px;text-align:center;font-size:10px;line-height:21.6px;color:#0ea0d9;"><span style="text-decoration:underline">596</span></div>
<div style="position:absolute;left:254.60000000000002px;top:717.7px;width:40px;text-align:center;font-size:10px;line-height:21.6px;color:#222">84.1</div>
<div style="position:absolute;left:18px;top:738.8px;width:269px;height:21.6px;background:#efefef"></div>
<div style="position:absolute;left:20.3px;top:739.3px;font-size:10px;line-height:21.6px;color:#222">2</div>
<div style="position:absolute;left:28.1px;top:739.3px;font-size:10px;line-height:21.6px;color:#0ea0d9;text-decoration:underline;white-space:nowrap">ENDOCRINE, NUTRITIONAL AND META...</div>
<div style="position:absolute;left:214.3px;top:739.3px;width:60px;text-align:center;font-size:10px;line-height:21.6px;color:#0ea0d9;"><span style="text-decoration:underline">3904</span></div>
<div style="position:absolute;left:254.60000000000002px;top:739.3px;width:40px;text-align:center;font-size:10px;line-height:21.6px;color:#222">84.0</div>
<div style="position:absolute;left:20.3px;top:760.9px;font-size:10px;line-height:21.6px;color:#222">3</div>
<div style="position:absolute;left:28.1px;top:760.9px;font-size:10px;line-height:21.6px;color:#0ea0d9;text-decoration:underline;white-space:nowrap">DISEASES OF THE CIRCULATORY SYS...</div>
<div style="position:absolute;left:214.3px;top:760.9px;width:60px;text-align:center;font-size:10px;line-height:21.6px;color:#0ea0d9;"><span style="text-decoration:underline">4114</span></div>
<div style="position:absolute;left:254.60000000000002px;top:760.9px;width:40px;text-align:center;font-size:10px;line-height:21.6px;color:#222">82.0</div>
<div style="position:absolute;left:18px;top:782.0px;width:269px;height:21.6px;background:#efefef"></div>
<div style="position:absolute;left:20.3px;top:782.5px;font-size:10px;line-height:21.6px;color:#222">4</div>
<div style="position:absolute;left:28.1px;top:782.5px;font-size:10px;line-height:21.6px;color:#0ea0d9;text-decoration:underline;white-space:nowrap">DISEASES OF THE RESPIRATORY SYS...</div>
<div style="position:absolute;left:214.3px;top:782.5px;width:60px;text-align:center;font-size:10px;line-height:21.6px;color:#0ea0d9;"><span style="text-decoration:underline">2269</span></div>
<div style="position:absolute;left:254.60000000000002px;top:782.5px;width:40px;text-align:center;font-size:10px;line-height:21.6px;color:#222">80.4</div>
<div style="position:absolute;left:20.3px;top:804.1px;font-size:10px;line-height:21.6px;color:#222">5</div>
<div style="position:absolute;left:28.1px;top:804.1px;font-size:10px;line-height:21.6px;color:#0ea0d9;text-decoration:underline;white-space:nowrap">CERTAIN INFECTIOUS AND PARASITIC...</div>
<div style="position:absolute;left:214.3px;top:804.1px;width:60px;text-align:center;font-size:10px;line-height:21.6px;color:#0ea0d9;"><span style="text-decoration:underline">1234</span></div>
<div style="position:absolute;left:254.60000000000002px;top:804.1px;width:40px;text-align:center;font-size:10px;line-height:21.6px;color:#222">79.6</div>
<div style="position:absolute;left:290px;top:685px;width:273px;height:17px;background:#808080;color:#fff;font-size:10px;font-weight:bold;line-height:17px;text-align:center">Bottom 5</div>
<div style="position:absolute;left:291px;top:703px;width:269px;height:121px;border:1px solid #ebebeb"></div>
<div style="position:absolute;left:292.5px;top:705px;font-size:10px;font-weight:bold;line-height:14px;color:#222;white-space:nowrap"># Category</div>
<div style="position:absolute;left:487px;top:705px;width:60px;text-align:center;font-size:10px;font-weight:bold;line-height:14px;color:#222">Cases</div>
<div style="position:absolute;left:527.9px;top:705px;width:40px;text-align:center;font-size:10px;font-weight:bold;line-height:14px;color:#222">%</div>
<div style="position:absolute;left:293px;top:717.7px;font-size:10px;line-height:21.6px;color:#222">1</div>
<div style="position:absolute;left:301.5px;top:717.7px;font-size:10px;line-height:21.6px;color:#0ea0d9;text-decoration:underline;white-space:nowrap">EXTERNAL CAUSES OF MORBIDITY (V...</div>
<div style="position:absolute;left:488.1px;top:717.7px;width:60px;text-align:center;font-size:10px;line-height:21.6px;color:#0ea0d9;"><span style="text-decoration:underline">1058</span></div>
<div style="position:absolute;left:528.3px;top:717.7px;width:40px;text-align:center;font-size:10px;line-height:21.6px;color:#ff0000">50.0</div>
<div style="position:absolute;left:292px;top:738.8px;width:269px;height:21.6px;background:#efefef"></div>
<div style="position:absolute;left:293px;top:739.3px;font-size:10px;line-height:21.6px;color:#222">2</div>
<div style="position:absolute;left:301.5px;top:739.3px;font-size:10px;line-height:21.6px;color:#0ea0d9;text-decoration:underline;white-space:nowrap">SYMPTOMS, SIGNS AND ABNORMAL C...</div>
<div style="position:absolute;left:488.1px;top:739.3px;width:60px;text-align:center;font-size:10px;line-height:21.6px;color:#0ea0d9;"><span style="text-decoration:underline">1745</span></div>
<div style="position:absolute;left:528.3px;top:739.3px;width:40px;text-align:center;font-size:10px;line-height:21.6px;color:#ff0000">53.5</div>
<div style="position:absolute;left:293px;top:760.9px;font-size:10px;line-height:21.6px;color:#222">3</div>
<div style="position:absolute;left:301.5px;top:760.9px;font-size:10px;line-height:21.6px;color:#0ea0d9;text-decoration:underline;white-space:nowrap">CONGENITAL MALFORMATIONS, DEF...</div>
<div style="position:absolute;left:488.1px;top:760.9px;width:60px;text-align:center;font-size:10px;line-height:21.6px;color:#0ea0d9;"><span style="text-decoration:underline">120</span></div>
<div style="position:absolute;left:528.3px;top:760.9px;width:40px;text-align:center;font-size:10px;line-height:21.6px;color:#ff0000">60.7</div>
<div style="position:absolute;left:292px;top:782.0px;width:269px;height:21.6px;background:#efefef"></div>
<div style="position:absolute;left:293px;top:782.5px;font-size:10px;line-height:21.6px;color:#222">4</div>
<div style="position:absolute;left:301.5px;top:782.5px;font-size:10px;line-height:21.6px;color:#0ea0d9;text-decoration:underline;white-space:nowrap">DISEASES OF THE BLOOD AND BLOO...</div>
<div style="position:absolute;left:488.1px;top:782.5px;width:60px;text-align:center;font-size:10px;line-height:21.6px;color:#0ea0d9;"><span style="text-decoration:underline">1351</span></div>
<div style="position:absolute;left:528.3px;top:782.5px;width:40px;text-align:center;font-size:10px;line-height:21.6px;color:#ff0000">66.9</div>
<div style="position:absolute;left:293px;top:804.1px;font-size:10px;line-height:21.6px;color:#222">5</div>
<div style="position:absolute;left:301.5px;top:804.1px;font-size:10px;line-height:21.6px;color:#0ea0d9;text-decoration:underline;white-space:nowrap">INJURY, POISONING AND CERTAIN OT...</div>
<div style="position:absolute;left:488.1px;top:804.1px;width:60px;text-align:center;font-size:10px;line-height:21.6px;color:#0ea0d9;"><span style="text-decoration:underline">1349</span></div>
<div style="position:absolute;left:528.3px;top:804.1px;width:40px;text-align:center;font-size:10px;line-height:21.6px;color:#ff0000">67.9</div>
<div style="position:absolute;left:567px;top:658px;width:549px;height:171.8px;border:1px solid #4a9cc0;border-radius:4px"></div>
<div style="position:absolute;left:568px;top:683px;width:538px;height:1px;background:#efebe8"></div>
<div style="position:absolute;left:1105px;top:659px;width:1px;height:25px;background:#efebe8"></div>
<div style="position:absolute;left:721px;top:665px;width:200px;text-align:center;font-size:11px;font-weight:bold;line-height:13px;color:#f5a300">Sub Category</div>
<svg style="position:absolute;left:1073px;top:664px" width="16" height="16" viewBox="0 0 16 16">
<defs><linearGradient id="gr1073" x1="0" x2="1"><stop offset="0" stop-color="#ff5050"/><stop offset="1" stop-color="#c00000"/></linearGradient>
<linearGradient id="gy1073" x1="0" x2="1"><stop offset="0" stop-color="#ffe070"/><stop offset="1" stop-color="#f0a000"/></linearGradient>
<linearGradient id="gb1073" x1="0" x2="1"><stop offset="0" stop-color="#a8d8ff"/><stop offset="1" stop-color="#1a78d0"/></linearGradient>
<linearGradient id="gg1073" x1="0" x2="1"><stop offset="0" stop-color="#a0e080"/><stop offset="1" stop-color="#208020"/></linearGradient></defs>
<rect x="0" y="10" width="4" height="5" fill="url(#gr1073)"/>
<rect x="3.5" y="7" width="4" height="8" fill="url(#gy1073)"/>
<rect x="7.5" y="4" width="4" height="11" fill="url(#gb1073)"/>
<rect x="11" y="0.5" width="4" height="14.5" fill="url(#gg1073)"/>
</svg>
<div style="position:absolute;left:569px;top:685px;width:278px;height:17px;background:#4682b4;color:#fff;font-size:10px;font-weight:bold;line-height:17px;text-align:center">TOP 5</div>
<div style="position:absolute;left:570px;top:703px;width:274px;height:121px;border:1px solid #ebebeb"></div>
<div style="position:absolute;left:572.9px;top:705px;font-size:10px;font-weight:bold;line-height:14px;color:#222;white-space:nowrap"># Category</div>
<div style="position:absolute;left:773.75px;top:705px;width:60px;text-align:center;font-size:10px;font-weight:bold;line-height:14px;color:#222">Cases</div>
<div style="position:absolute;left:813.8px;top:705px;width:40px;text-align:center;font-size:10px;font-weight:bold;line-height:14px;color:#222">%</div>
<div style="position:absolute;left:573.4px;top:717.7px;font-size:10px;line-height:21.6px;color:#222">1</div>
<div style="position:absolute;left:581.4px;top:717.7px;font-size:10px;line-height:21.6px;color:#0ea0d9;text-decoration:underline;white-space:nowrap">DISORDERS OF EYELID, LACRIMAL SYS...</div>
<div style="position:absolute;left:773.5px;top:717.7px;width:60px;text-align:center;font-size:10px;line-height:21.6px;color:#0ea0d9;"><span style="text-decoration:underline">54</span></div>
<div style="position:absolute;left:813.6px;top:717.7px;width:40px;text-align:center;font-size:10px;line-height:21.6px;color:#222">100</div>
<div style="position:absolute;left:571px;top:738.8px;width:274px;height:21.6px;background:#efefef"></div>
<div style="position:absolute;left:573.4px;top:739.3px;font-size:10px;line-height:21.6px;color:#222">2</div>
<div style="position:absolute;left:581.4px;top:739.3px;font-size:10px;line-height:21.6px;color:#0ea0d9;text-decoration:underline;white-space:nowrap">INFLAMMATORY DISEASES OF FEMALE...</div>
<div style="position:absolute;left:773.5px;top:739.3px;width:60px;text-align:center;font-size:10px;line-height:21.6px;color:#0ea0d9;"><span style="text-decoration:underline">21</span></div>
<div style="position:absolute;left:813.6px;top:739.3px;width:40px;text-align:center;font-size:10px;line-height:21.6px;color:#222">100</div>
<div style="position:absolute;left:573.4px;top:760.9px;font-size:10px;line-height:21.6px;color:#222">3</div>
<div style="position:absolute;left:581.4px;top:760.9px;font-size:10px;line-height:21.6px;color:#0ea0d9;text-decoration:underline;white-space:nowrap">OTHER OSTEOPATHIES</div>
<div style="position:absolute;left:773.5px;top:760.9px;width:60px;text-align:center;font-size:10px;line-height:21.6px;color:#0ea0d9;"><span style="text-decoration:underline">5</span></div>
<div style="position:absolute;left:813.6px;top:760.9px;width:40px;text-align:center;font-size:10px;line-height:21.6px;color:#222">100</div>
<div style="position:absolute;left:571px;top:782.0px;width:274px;height:21.6px;background:#efefef"></div>
<div style="position:absolute;left:573.4px;top:782.5px;font-size:10px;line-height:21.6px;color:#222">4</div>
<div style="position:absolute;left:581.4px;top:782.5px;font-size:10px;line-height:21.6px;color:#0ea0d9;text-decoration:underline;white-space:nowrap">ENCOUNTER FOR DELIVERY (O80-O82)</div>
<div style="position:absolute;left:773.5px;top:782.5px;width:60px;text-align:center;font-size:10px;line-height:21.6px;color:#0ea0d9;"><span style="text-decoration:underline">4</span></div>
<div style="position:absolute;left:813.6px;top:782.5px;width:40px;text-align:center;font-size:10px;line-height:21.6px;color:#222">100</div>
<div style="position:absolute;left:573.4px;top:804.1px;font-size:10px;line-height:21.6px;color:#222">5</div>
<div style="position:absolute;left:581.4px;top:804.1px;font-size:10px;line-height:21.6px;color:#0ea0d9;text-decoration:underline;white-space:nowrap">PEDICULOSIS, ACARIASIS AND OTHER...</div>
<div style="position:absolute;left:773.5px;top:804.1px;width:60px;text-align:center;font-size:10px;line-height:21.6px;color:#0ea0d9;"><span style="text-decoration:underline">2</span></div>
<div style="position:absolute;left:813.6px;top:804.1px;width:40px;text-align:center;font-size:10px;line-height:21.6px;color:#222">100</div>
<div style="position:absolute;left:848px;top:685px;width:268px;height:17px;background:#808080;color:#fff;font-size:10px;font-weight:bold;line-height:17px;text-align:center">Bottom 5</div>
<div style="position:absolute;left:849px;top:703px;width:264px;height:121px;border:1px solid #ebebeb"></div>
<div style="position:absolute;left:851.1px;top:705px;font-size:10px;font-weight:bold;line-height:14px;color:#222;white-space:nowrap"># Category</div>
<div style="position:absolute;left:1052.25px;top:705px;width:60px;text-align:center;font-size:10px;font-weight:bold;line-height:14px;color:#222">Cases</div>
<div style="position:absolute;left:1085.5px;top:705px;width:40px;text-align:center;font-size:10px;font-weight:bold;line-height:14px;color:#222">%</div>
<div style="position:absolute;left:851.6px;top:717.7px;font-size:10px;line-height:21.6px;color:#222">1</div>
<div style="position:absolute;left:859.3px;top:717.7px;font-size:10px;line-height:21.6px;color:#0ea0d9;text-decoration:underline;white-space:nowrap">BIOMECHANICAL LESIONS, NOT ELSE...</div>
<div style="position:absolute;left:1052.5px;top:717.7px;width:60px;text-align:center;font-size:10px;line-height:21.6px;color:#0ea0d9;"><span style="text-decoration:underline">12</span></div>
<div style="position:absolute;left:1087px;top:717.7px;width:40px;text-align:center;font-size:10px;line-height:21.6px;color:#ff0000">0</div>
<div style="position:absolute;left:850px;top:738.8px;width:264px;height:21.6px;background:#efefef"></div>
<div style="position:absolute;left:851.6px;top:739.3px;font-size:10px;line-height:21.6px;color:#222">2</div>
<div style="position:absolute;left:859.3px;top:739.3px;font-size:10px;line-height:21.6px;color:#0ea0d9;text-decoration:underline;white-space:nowrap">CERTAIN EARLY COMPLICATIONS OF T...</div>
<div style="position:absolute;left:1052.5px;top:739.3px;width:60px;text-align:center;font-size:10px;line-height:21.6px;color:#0ea0d9;"><span style="text-decoration:underline">2</span></div>
<div style="position:absolute;left:1087px;top:739.3px;width:40px;text-align:center;font-size:10px;line-height:21.6px;color:#ff0000">0</div>
<div style="position:absolute;left:851.6px;top:760.9px;font-size:10px;line-height:21.6px;color:#222">3</div>
<div style="position:absolute;left:859.3px;top:760.9px;font-size:10px;line-height:21.6px;color:#0ea0d9;text-decoration:underline;white-space:nowrap">DENTOFACIAL ANOMALIES [INCLUDING...</div>
<div style="position:absolute;left:1052.5px;top:760.9px;width:60px;text-align:center;font-size:10px;line-height:21.6px;color:#0ea0d9;"><span style="text-decoration:underline">2</span></div>
<div style="position:absolute;left:1087px;top:760.9px;width:40px;text-align:center;font-size:10px;line-height:21.6px;color:#ff0000">0</div>
<div style="position:absolute;left:850px;top:782.0px;width:264px;height:21.6px;background:#efefef"></div>
<div style="position:absolute;left:851.6px;top:782.5px;font-size:10px;line-height:21.6px;color:#222">4</div>
<div style="position:absolute;left:859.3px;top:782.5px;font-size:10px;line-height:21.6px;color:#0ea0d9;text-decoration:underline;white-space:nowrap">DISORDERS OF OCULAR MUSCLES, BI...</div>
<div style="position:absolute;left:1052.5px;top:782.5px;width:60px;text-align:center;font-size:10px;line-height:21.6px;color:#0ea0d9;"><span style="text-decoration:underline">2</span></div>
<div style="position:absolute;left:1087px;top:782.5px;width:40px;text-align:center;font-size:10px;line-height:21.6px;color:#ff0000">0</div>
<div style="position:absolute;left:851.6px;top:804.1px;font-size:10px;line-height:21.6px;color:#222">5</div>
<div style="position:absolute;left:859.3px;top:804.1px;font-size:10px;line-height:21.6px;color:#0ea0d9;text-decoration:underline;white-space:nowrap">MALIGNANT NEOPLASMS OF MESOTHE...</div>
<div style="position:absolute;left:1052.5px;top:804.1px;width:60px;text-align:center;font-size:10px;line-height:21.6px;color:#0ea0d9;"><span style="text-decoration:underline">2</span></div>
<div style="position:absolute;left:1087px;top:804.1px;width:40px;text-align:center;font-size:10px;line-height:21.6px;color:#ff0000">0</div>
<div style="position:absolute;left:1120px;top:658px;width:490px;height:171.8px;border:1px solid #4a9cc0;border-radius:4px"></div>
<div style="position:absolute;left:1121px;top:683px;width:480px;height:1px;background:#efebe8"></div>
<div style="position:absolute;left:1600px;top:659px;width:1px;height:25px;background:#efebe8"></div>
<div style="position:absolute;left:1247px;top:665px;width:200px;text-align:center;font-size:11px;font-weight:bold;line-height:13px;color:#f5a300">Code Category</div>
<svg style="position:absolute;left:1573px;top:664px" width="16" height="16" viewBox="0 0 16 16">
<defs><linearGradient id="gr1573" x1="0" x2="1"><stop offset="0" stop-color="#ff5050"/><stop offset="1" stop-color="#c00000"/></linearGradient>
<linearGradient id="gy1573" x1="0" x2="1"><stop offset="0" stop-color="#ffe070"/><stop offset="1" stop-color="#f0a000"/></linearGradient>
<linearGradient id="gb1573" x1="0" x2="1"><stop offset="0" stop-color="#a8d8ff"/><stop offset="1" stop-color="#1a78d0"/></linearGradient>
<linearGradient id="gg1573" x1="0" x2="1"><stop offset="0" stop-color="#a0e080"/><stop offset="1" stop-color="#208020"/></linearGradient></defs>
<rect x="0" y="10" width="4" height="5" fill="url(#gr1573)"/>
<rect x="3.5" y="7" width="4" height="8" fill="url(#gy1573)"/>
<rect x="7.5" y="4" width="4" height="11" fill="url(#gb1573)"/>
<rect x="11" y="0.5" width="4" height="14.5" fill="url(#gg1573)"/>
</svg>
<div style="position:absolute;left:1122px;top:685px;width:248px;height:17px;background:#4682b4;color:#fff;font-size:10px;font-weight:bold;line-height:17px;text-align:center">TOP 5</div>
<div style="position:absolute;left:1123px;top:703px;width:244px;height:121px;border:1px solid #ebebeb"></div>
<div style="position:absolute;left:1125.5px;top:705px;font-size:10px;font-weight:bold;line-height:14px;color:#222;white-space:nowrap"># Category</div>
<div style="position:absolute;left:1301.1px;top:705px;width:60px;text-align:center;font-size:10px;font-weight:bold;line-height:14px;color:#222">Cases</div>
<div style="position:absolute;left:1338px;top:705px;width:40px;text-align:center;font-size:10px;font-weight:bold;line-height:14px;color:#222">%</div>
<div style="position:absolute;left:1126px;top:717.7px;font-size:10px;line-height:21.6px;color:#222">1</div>
<div style="position:absolute;left:1133.4px;top:717.7px;font-size:10px;line-height:21.6px;color:#0ea0d9;text-decoration:underline;white-space:nowrap">OTHER BACTERIAL DISEASES, NO...</div>
<div style="position:absolute;left:1301.4px;top:717.7px;width:60px;text-align:center;font-size:10px;line-height:21.6px;color:#0ea0d9;"><span style="text-decoration:underline">55</span></div>
<div style="position:absolute;left:1338.3px;top:717.7px;width:40px;text-align:center;font-size:10px;line-height:21.6px;color:#222">100</div>
<div style="position:absolute;left:1124px;top:738.8px;width:244px;height:21.6px;background:#efefef"></div>
<div style="position:absolute;left:1126px;top:739.3px;font-size:10px;line-height:21.6px;color:#222">2</div>
<div style="position:absolute;left:1133.4px;top:739.3px;font-size:10px;line-height:21.6px;color:#0ea0d9;text-decoration:underline;white-space:nowrap">LATE PREGNANCY (O48)</div>
<div style="position:absolute;left:1301.4px;top:739.3px;width:60px;text-align:center;font-size:10px;line-height:21.6px;color:#0ea0d9;"><span style="text-decoration:underline">55</span></div>
<div style="position:absolute;left:1338.3px;top:739.3px;width:40px;text-align:center;font-size:10px;line-height:21.6px;color:#222">100</div>
<div style="position:absolute;left:1126px;top:760.9px;font-size:10px;line-height:21.6px;color:#222">3</div>
<div style="position:absolute;left:1133.4px;top:760.9px;font-size:10px;line-height:21.6px;color:#0ea0d9;text-decoration:underline;white-space:nowrap">OTHER FOLLICULAR DISORDERS (...</div>
<div style="position:absolute;left:1301.4px;top:760.9px;width:60px;text-align:center;font-size:10px;line-height:21.6px;color:#0ea0d9;"><span style="text-decoration:underline">38</span></div>
<div style="position:absolute;left:1338.3px;top:760.9px;width:40px;text-align:center;font-size:10px;line-height:21.6px;color:#222">100</div>
<div style="position:absolute;left:1124px;top:782.0px;width:244px;height:21.6px;background:#efefef"></div>
<div style="position:absolute;left:1126px;top:782.5px;font-size:10px;line-height:21.6px;color:#222">4</div>
<div style="position:absolute;left:1133.4px;top:782.5px;font-size:10px;line-height:21.6px;color:#0ea0d9;text-decoration:underline;white-space:nowrap">HORDEOLUM AND CHALAZION (H00)</div>
<div style="position:absolute;left:1301.4px;top:782.5px;width:60px;text-align:center;font-size:10px;line-height:21.6px;color:#0ea0d9;"><span style="text-decoration:underline">38</span></div>
<div style="position:absolute;left:1338.3px;top:782.5px;width:40px;text-align:center;font-size:10px;line-height:21.6px;color:#222">100</div>
<div style="position:absolute;left:1126px;top:804.1px;font-size:10px;line-height:21.6px;color:#222">5</div>
<div style="position:absolute;left:1133.4px;top:804.1px;font-size:10px;line-height:21.6px;color:#0ea0d9;text-decoration:underline;white-space:nowrap">DISEASES OF PULP AND PERIAPIC...</div>
<div style="position:absolute;left:1301.4px;top:804.1px;width:60px;text-align:center;font-size:10px;line-height:21.6px;color:#0ea0d9;"><span style="text-decoration:underline">38</span></div>
<div style="position:absolute;left:1338.3px;top:804.1px;width:40px;text-align:center;font-size:10px;line-height:21.6px;color:#222">100</div>
<div style="position:absolute;left:1371px;top:685px;width:239px;height:17px;background:#808080;color:#fff;font-size:10px;font-weight:bold;line-height:17px;text-align:center">Bottom 5</div>
<div style="position:absolute;left:1372px;top:703px;width:235px;height:121px;border:1px solid #ebebeb"></div>
<div style="position:absolute;left:1373.2px;top:705px;font-size:10px;font-weight:bold;line-height:14px;color:#222;white-space:nowrap"># Category</div>
<div style="position:absolute;left:1549.5px;top:705px;width:60px;text-align:center;font-size:10px;font-weight:bold;line-height:14px;color:#222">Cases</div>
<div style="position:absolute;left:1581.7px;top:705px;width:40px;text-align:center;font-size:10px;font-weight:bold;line-height:14px;color:#222">%</div>
<div style="position:absolute;left:1373.7px;top:717.7px;font-size:10px;line-height:21.6px;color:#222">1</div>
<div style="position:absolute;left:1380.9px;top:717.7px;font-size:10px;line-height:21.6px;color:#0ea0d9;text-decoration:underline;white-space:nowrap">NONRHEUMATIC PULMONARY VAL...</div>
<div style="position:absolute;left:1549.5px;top:717.7px;width:60px;text-align:center;font-size:10px;line-height:21.6px;color:#0ea0d9;"><span style="text-decoration:underline">22</span></div>
<div style="position:absolute;left:1582px;top:717.7px;width:40px;text-align:center;font-size:10px;line-height:21.6px;color:#ff0000">0</div>
<div style="position:absolute;left:1373px;top:738.8px;width:235px;height:21.6px;background:#efefef"></div>
<div style="position:absolute;left:1373.7px;top:739.3px;font-size:10px;line-height:21.6px;color:#222">2</div>
<div style="position:absolute;left:1380.9px;top:739.3px;font-size:10px;line-height:21.6px;color:#0ea0d9;text-decoration:underline;white-space:nowrap">ROSACEA (L71)</div>
<div style="position:absolute;left:1549.5px;top:739.3px;width:60px;text-align:center;font-size:10px;line-height:21.6px;color:#0ea0d9;"><span style="text-decoration:underline">20</span></div>
<div style="position:absolute;left:1582px;top:739.3px;width:40px;text-align:center;font-size:10px;line-height:21.6px;color:#ff0000">0</div>
<div style="position:absolute;left:1373.7px;top:760.9px;font-size:10px;line-height:21.6px;color:#222">3</div>
<div style="position:absolute;left:1380.9px;top:760.9px;font-size:10px;line-height:21.6px;color:#0ea0d9;text-decoration:underline;white-space:nowrap">FOREIGN BODY OR OBJECT ENTE...</div>
<div style="position:absolute;left:1549.5px;top:760.9px;width:60px;text-align:center;font-size:10px;line-height:21.6px;color:#0ea0d9;"><span style="text-decoration:underline">13</span></div>
<div style="position:absolute;left:1582px;top:760.9px;width:40px;text-align:center;font-size:10px;line-height:21.6px;color:#ff0000">0</div>
<div style="position:absolute;left:1373px;top:782.0px;width:235px;height:21.6px;background:#efefef"></div>
<div style="position:absolute;left:1373.7px;top:782.5px;font-size:10px;line-height:21.6px;color:#222">4</div>
<div style="position:absolute;left:1380.9px;top:782.5px;font-size:10px;line-height:21.6px;color:#0ea0d9;text-decoration:underline;white-space:nowrap">MATERN INFEC/PARASTC DIS CLA...</div>
<div style="position:absolute;left:1549.5px;top:782.5px;width:60px;text-align:center;font-size:10px;line-height:21.6px;color:#0ea0d9;"><span style="text-decoration:underline">13</span></div>
<div style="position:absolute;left:1582px;top:782.5px;width:40px;text-align:center;font-size:10px;line-height:21.6px;color:#ff0000">0</div>
<div style="position:absolute;left:1373.7px;top:804.1px;font-size:10px;line-height:21.6px;color:#222">5</div>
<div style="position:absolute;left:1380.9px;top:804.1px;font-size:10px;line-height:21.6px;color:#0ea0d9;text-decoration:underline;white-space:nowrap">BIOMECHANICAL LESIONS, NOT EL...</div>
<div style="position:absolute;left:1549.5px;top:804.1px;width:60px;text-align:center;font-size:10px;line-height:21.6px;color:#0ea0d9;"><span style="text-decoration:underline">12</span></div>
<div style="position:absolute;left:1582px;top:804.1px;width:40px;text-align:center;font-size:10px;line-height:21.6px;color:#ff0000">0</div>
<div style="position:absolute;left:1614px;top:658px;width:292px;height:171.8px;border:1px solid #4a9cc0;border-radius:4px"></div>
<div style="position:absolute;left:1615px;top:683px;width:286px;height:1px;background:#efebe8"></div>
<div style="position:absolute;left:1900px;top:659px;width:1px;height:25px;background:#efebe8"></div>
<div style="position:absolute;left:1648.5px;top:665px;width:200px;text-align:center;font-size:11px;font-weight:bold;line-height:13px;color:#f5a300">Diagnosis</div>
<svg style="position:absolute;left:1882px;top:664px" width="16" height="16" viewBox="0 0 16 16">
<defs><linearGradient id="gr1882" x1="0" x2="1"><stop offset="0" stop-color="#ff5050"/><stop offset="1" stop-color="#c00000"/></linearGradient>
<linearGradient id="gy1882" x1="0" x2="1"><stop offset="0" stop-color="#ffe070"/><stop offset="1" stop-color="#f0a000"/></linearGradient>
<linearGradient id="gb1882" x1="0" x2="1"><stop offset="0" stop-color="#a8d8ff"/><stop offset="1" stop-color="#1a78d0"/></linearGradient>
<linearGradient id="gg1882" x1="0" x2="1"><stop offset="0" stop-color="#a0e080"/><stop offset="1" stop-color="#208020"/></linearGradient></defs>
<rect x="0" y="10" width="4" height="5" fill="url(#gr1882)"/>
<rect x="3.5" y="7" width="4" height="8" fill="url(#gy1882)"/>
<rect x="7.5" y="4" width="4" height="11" fill="url(#gb1882)"/>
<rect x="11" y="0.5" width="4" height="14.5" fill="url(#gg1882)"/>
</svg>
<div style="position:absolute;left:1616px;top:685px;width:141px;height:17px;background:#4682b4;color:#fff;font-size:10px;font-weight:bold;line-height:17px;text-align:center">TOP 5</div>
<div style="position:absolute;left:1617px;top:703px;width:137px;height:121px;border:1px solid #ebebeb"></div>
<div style="position:absolute;left:1621.25px;top:705px;font-size:10px;font-weight:bold;line-height:14px;color:#222;white-space:nowrap"># Code</div>
<div style="position:absolute;left:1673.9px;top:705px;width:60px;text-align:center;font-size:10px;font-weight:bold;line-height:14px;color:#222">Cases</div>
<div style="position:absolute;left:1720.8px;top:705px;width:40px;text-align:center;font-size:10px;font-weight:bold;line-height:14px;color:#222">%</div>
<div style="position:absolute;left:1621.75px;top:717.7px;font-size:10px;line-height:21.6px;color:#222">1</div>
<div style="position:absolute;left:1630.2px;top:717.7px;font-size:10px;line-height:21.6px;color:#0ea0d9;text-decoration:underline;white-space:nowrap">Z38.01</div>
<div style="position:absolute;left:1674px;top:717.7px;width:60px;text-align:center;font-size:10px;line-height:21.6px;color:#0ea0d9;"><span style="text-decoration:underline">136</span></div>
<div style="position:absolute;left:1721.5px;top:717.7px;width:40px;text-align:center;font-size:10px;line-height:21.6px;color:#222">100</div>
<div style="position:absolute;left:1618px;top:738.8px;width:137px;height:21.6px;background:#efefef"></div>
<div style="position:absolute;left:1621.75px;top:739.3px;font-size:10px;line-height:21.6px;color:#222">2</div>
<div style="position:absolute;left:1630.2px;top:739.3px;font-size:10px;line-height:21.6px;color:#0ea0d9;text-decoration:underline;white-space:nowrap">O48.0</div>
<div style="position:absolute;left:1674px;top:739.3px;width:60px;text-align:center;font-size:10px;line-height:21.6px;color:#0ea0d9;"><span style="text-decoration:underline">55</span></div>
<div style="position:absolute;left:1721.5px;top:739.3px;width:40px;text-align:center;font-size:10px;line-height:21.6px;color:#222">100</div>
<div style="position:absolute;left:1621.75px;top:760.9px;font-size:10px;line-height:21.6px;color:#222">3</div>
<div style="position:absolute;left:1630.2px;top:760.9px;font-size:10px;line-height:21.6px;color:#0ea0d9;text-decoration:underline;white-space:nowrap">A48.0</div>
<div style="position:absolute;left:1674px;top:760.9px;width:60px;text-align:center;font-size:10px;line-height:21.6px;color:#0ea0d9;"><span style="text-decoration:underline">55</span></div>
<div style="position:absolute;left:1721.5px;top:760.9px;width:40px;text-align:center;font-size:10px;line-height:21.6px;color:#222">100</div>
<div style="position:absolute;left:1618px;top:782.0px;width:137px;height:21.6px;background:#efefef"></div>
<div style="position:absolute;left:1621.75px;top:782.5px;font-size:10px;line-height:21.6px;color:#222">4</div>
<div style="position:absolute;left:1630.2px;top:782.5px;font-size:10px;line-height:21.6px;color:#0ea0d9;text-decoration:underline;white-space:nowrap">Z3A.37</div>
<div style="position:absolute;left:1674px;top:782.5px;width:60px;text-align:center;font-size:10px;line-height:21.6px;color:#0ea0d9;"><span style="text-decoration:underline">54</span></div>
<div style="position:absolute;left:1721.5px;top:782.5px;width:40px;text-align:center;font-size:10px;line-height:21.6px;color:#222">100</div>
<div style="position:absolute;left:1621.75px;top:804.1px;font-size:10px;line-height:21.6px;color:#222">5</div>
<div style="position:absolute;left:1630.2px;top:804.1px;font-size:10px;line-height:21.6px;color:#0ea0d9;text-decoration:underline;white-space:nowrap">K04.7</div>
<div style="position:absolute;left:1674px;top:804.1px;width:60px;text-align:center;font-size:10px;line-height:21.6px;color:#0ea0d9;"><span style="text-decoration:underline">38</span></div>
<div style="position:absolute;left:1721.5px;top:804.1px;width:40px;text-align:center;font-size:10px;line-height:21.6px;color:#222">100</div>
<div style="position:absolute;left:1758px;top:685px;width:148px;height:17px;background:#808080;color:#fff;font-size:10px;font-weight:bold;line-height:17px;text-align:center">Bottom 5</div>
<div style="position:absolute;left:1759px;top:703px;width:144px;height:121px;border:1px solid #ebebeb"></div>
<div style="position:absolute;left:1762.5px;top:705px;font-size:10px;font-weight:bold;line-height:14px;color:#222;white-space:nowrap"># Code</div>
<div style="position:absolute;left:1826.1px;top:705px;width:60px;text-align:center;font-size:10px;font-weight:bold;line-height:14px;color:#222">Cases</div>
<div style="position:absolute;left:1875.4px;top:705px;width:40px;text-align:center;font-size:10px;font-weight:bold;line-height:14px;color:#222">%</div>
<div style="position:absolute;left:1763px;top:717.7px;font-size:10px;line-height:21.6px;color:#222">1</div>
<div style="position:absolute;left:1772.2px;top:717.7px;font-size:10px;line-height:21.6px;color:#0ea0d9;text-decoration:underline;white-space:nowrap">R19.4</div>
<div style="position:absolute;left:1833.7px;top:717.7px;width:60px;text-align:center;font-size:10px;line-height:21.6px;color:#0ea0d9;"><span style="text-decoration:underline">29</span></div>
<div style="position:absolute;left:1875.4px;top:717.7px;width:40px;text-align:center;font-size:10px;line-height:21.6px;color:#ff0000">0</div>
<div style="position:absolute;left:1760px;top:738.8px;width:144px;height:21.6px;background:#efefef"></div>
<div style="position:absolute;left:1763px;top:739.3px;font-size:10px;line-height:21.6px;color:#222">2</div>
<div style="position:absolute;left:1772.2px;top:739.3px;font-size:10px;line-height:21.6px;color:#0ea0d9;text-decoration:underline;white-space:nowrap">T81.30XA</div>
<div style="position:absolute;left:1833.7px;top:739.3px;width:60px;text-align:center;font-size:10px;line-height:21.6px;color:#0ea0d9;"><span style="text-decoration:underline">27</span></div>
<div style="position:absolute;left:1875.4px;top:739.3px;width:40px;text-align:center;font-size:10px;line-height:21.6px;color:#ff0000">0</div>
<div style="position:absolute;left:1763px;top:760.9px;font-size:10px;line-height:21.6px;color:#222">3</div>
<div style="position:absolute;left:1772.2px;top:760.9px;font-size:10px;line-height:21.6px;color:#0ea0d9;text-decoration:underline;white-space:nowrap">Y92.230</div>
<div style="position:absolute;left:1833.7px;top:760.9px;width:60px;text-align:center;font-size:10px;line-height:21.6px;color:#0ea0d9;"><span style="text-decoration:underline">23</span></div>
<div style="position:absolute;left:1875.4px;top:760.9px;width:40px;text-align:center;font-size:10px;line-height:21.6px;color:#ff0000">0</div>
<div style="position:absolute;left:1760px;top:782.0px;width:144px;height:21.6px;background:#efefef"></div>
<div style="position:absolute;left:1763px;top:782.5px;font-size:10px;line-height:21.6px;color:#222">4</div>
<div style="position:absolute;left:1772.2px;top:782.5px;font-size:10px;line-height:21.6px;color:#0ea0d9;text-decoration:underline;white-space:nowrap">I37.1</div>
<div style="position:absolute;left:1833.7px;top:782.5px;width:60px;text-align:center;font-size:10px;line-height:21.6px;color:#0ea0d9;"><span style="text-decoration:underline">22</span></div>
<div style="position:absolute;left:1875.4px;top:782.5px;width:40px;text-align:center;font-size:10px;line-height:21.6px;color:#ff0000">0</div>
<div style="position:absolute;left:1763px;top:804.1px;font-size:10px;line-height:21.6px;color:#222">5</div>
<div style="position:absolute;left:1772.2px;top:804.1px;font-size:10px;line-height:21.6px;color:#0ea0d9;text-decoration:underline;white-space:nowrap">Z80.0</div>
<div style="position:absolute;left:1833.7px;top:804.1px;width:60px;text-align:center;font-size:10px;line-height:21.6px;color:#0ea0d9;"><span style="text-decoration:underline">21</span></div>
<div style="position:absolute;left:1875.4px;top:804.1px;width:40px;text-align:center;font-size:10px;line-height:21.6px;color:#ff0000">0</div>
</body></html>
